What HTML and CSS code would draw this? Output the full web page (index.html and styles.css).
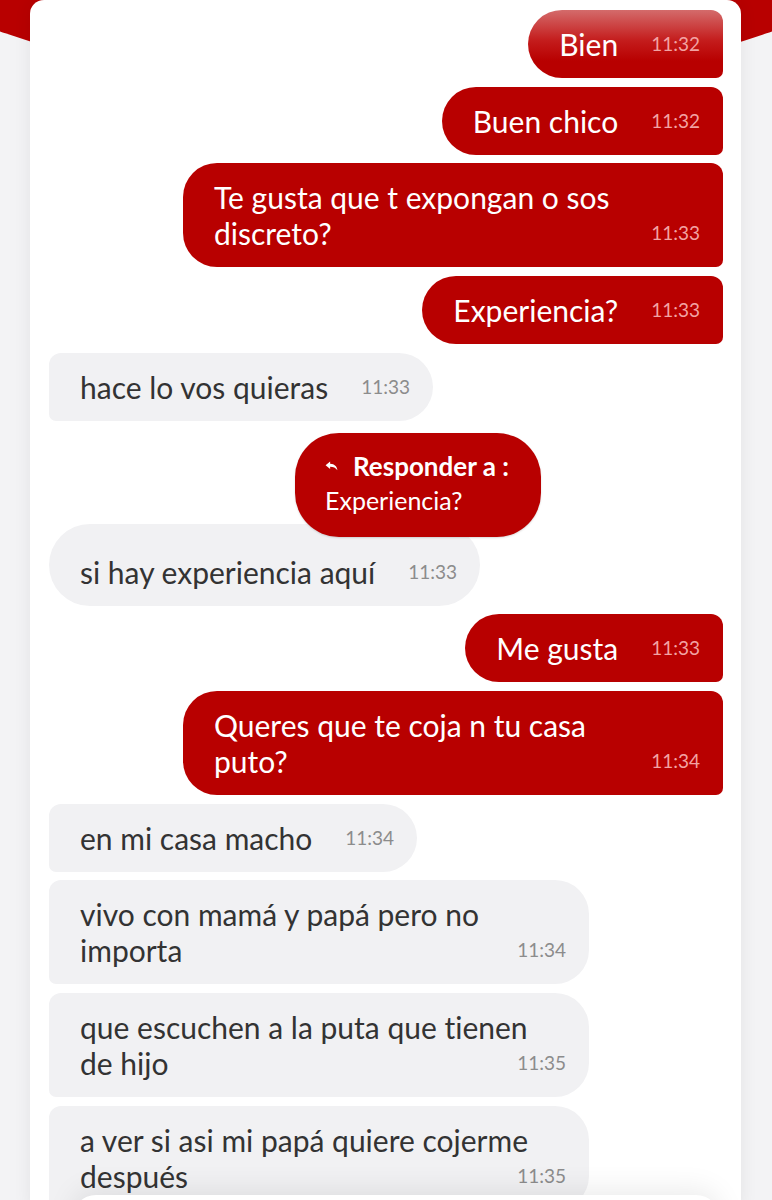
FILE: index.html
```html
<!DOCTYPE html>
<html lang="es">
<head>
    <meta charset="UTF-8">
    <meta name="viewport" content="width=device-width, initial-scale=1.0">
    <title>Chat</title>
    <link rel="stylesheet" href="styles.css">
</head>
<body>
    <div class="screen">
        <div class="header-arc"></div>

        <main class="chat">
            <div class="msg sent glossy">Bien<span class="time">11:32</span></div>
            <div class="msg sent">Buen chico<span class="time">11:32</span></div>
            <div class="msg sent wide">Te gusta que t expongan o sos<br>discreto?<span class="time">11:33</span></div>
            <div class="msg sent">Experiencia?<span class="time">11:33</span></div>
            <div class="msg received">hace lo vos quieras<span class="time">11:33</span></div>

            <div class="reply">
                <div class="reply-title">
                    <svg class="reply-icon" viewBox="0 0 14 11" width="13" height="10">
                        <path d="M5.5 0.5 L0.5 4.6 L5.5 8.7 L5.5 6.2 C9 6.2 11.6 7.2 13.5 10.2 C13 6 10.5 3.3 5.5 3 Z" fill="#fff"/>
                    </svg>
                    Responder a :
                </div>
                <div class="reply-quote">Experiencia?</div>
            </div>

            <div class="msg received replied">si hay experiencia aquí<span class="time">11:33</span></div>
            <div class="msg sent">Me gusta<span class="time">11:33</span></div>
            <div class="msg sent wide">Queres que te coja n tu casa<br>puto?<span class="time">11:34</span></div>
            <div class="msg received">en mi casa macho<span class="time">11:34</span></div>
            <div class="msg received wide">vivo con mamá y papá pero no<br>importa<span class="time">11:34</span></div>
            <div class="msg received wide">que escuchen a la puta que tienen<br>de hijo<span class="time">11:35</span></div>
            <div class="msg received wide">a ver si asi mi papá quiere cojerme<br>después<span class="time">11:35</span></div>
        </main>

        <div class="composer"></div>
    </div>
</body>
</html>
```

FILE: styles.css
```css
html, body {
    margin: 0;
    padding: 0;
}
body {
    font-family: Lato, "Open Sans", sans-serif;
    font-variant-ligatures: none;
    background: #f3f3f5;
}
.screen {
    position: relative;
    height: 1200px;
    overflow: hidden;
    background: #f3f3f5;
}
.header-arc {
    position: absolute;
    left: -214px;
    top: -417px;
    width: 1200px;
    height: 508px;
    border-radius: 50%;
    background: #b80000;
}
.chat {
    position: relative;
    margin: 0 31px 0 30px;
    min-height: 1200px;
    padding: 10px 18px 0 19px;
    box-sizing: border-box;
    background: #fff;
    border-radius: 14px 14px 0 0;
    box-shadow: 0 0 18px rgba(0,0,0,0.07);
    display: flex;
    flex-direction: column;
    gap: 8.7px;
}
.msg {
    width: fit-content;
    max-width: 540px;
    box-sizing: border-box;
    padding: 16px 23px 16px 31px;
    font-size: 30px;
    line-height: 36px;
}
.msg.wide {
    width: 540px;
}
.msg .time {
    float: right;
    margin-left: 33px;
    font-size: 19px;
    line-height: 36px;
}
.sent {
    align-self: flex-end;
    background: #b80000;
    color: #fff;
    border-radius: 34px 12px 7px 34px;
}
.sent .time {
    color: #f2a3a3;
}
.glossy {
    background: linear-gradient(#d46b6b 0%, #c41c1c 45%, #b80000 75%);
}
.received {
    align-self: flex-start;
    background: #f1f1f3;
    color: #333;
    border-radius: 12px 34px 34px 7px;
}
.received .time {
    color: #8c8c8c;
}
.received.replied {
    padding-top: 30px;
    border-radius: 42px;
}
.reply {
    position: relative;
    z-index: 1;
    align-self: flex-start;
    margin: 4px 0 -22.5px 246px;
    padding: 16px 32px 20px 30px;
    background: #b80000;
    color: #fff;
    border-radius: 44px;
    line-height: 34px;
    box-shadow: 0 1px 2px rgba(0,0,0,0.15);
}
.reply-title {
    display: flex;
    align-items: center;
    gap: 15px;
    font-size: 26px;
    font-weight: 700;
}
.reply-icon {
    flex-shrink: 0;
}
.reply-quote {
    font-size: 25px;
}
.composer {
    position: absolute;
    left: 72px;
    right: 52px;
    top: 1195px;
    height: 60px;
    background: #fff;
    border-radius: 24px;
    box-shadow: 0 -6px 28px rgba(0,0,0,0.08);
}
```
